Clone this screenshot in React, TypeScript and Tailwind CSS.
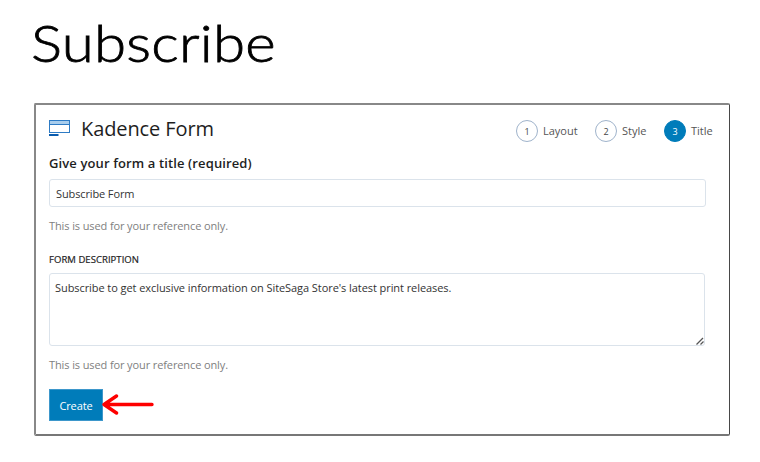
import clsx from "clsx";

interface Step {
  number: number;
  label: string;
  active?: boolean;
  labelClass: string;
}

const steps: Step[] = [
  { number: 1, label: "Layout", labelClass: "w-[52px]" },
  { number: 2, label: "Style", labelClass: "w-[42px]" },
  { number: 3, label: "Title", active: true, labelClass: "w-[22px]" },
];

const FormIcon = () => (
  <svg width="22" height="18" viewBox="0 0 22 18" fill="none">
    <rect x="0.5" y="0.5" width="20" height="4" fill="#a9cdec" stroke="#2e7bc4" />
    <rect x="0.5" y="4.5" width="20" height="8" fill="#fff" stroke="#2e7bc4" />
    <rect x="0" y="14" width="9.5" height="2" fill="#0a5cae" />
  </svg>
);

const HelpText = () => (
  <p className="text-[11px] leading-4 tracking-[-0.11px] text-[#808080]">
    This is used for your reference only.
  </p>
);

const App = () => {
  return (
    <div className="h-[462px] w-[760px] overflow-hidden bg-white pl-[34px] pt-[14px] font-['Open_Sans','Noto_Sans',sans-serif]">
      <h1 className="-ml-[3px] h-[89px] w-fit origin-left scale-x-[1.12] font-['Lato',sans-serif] text-[52px] font-light leading-[56px] tracking-[0.2px] text-black [-webkit-text-stroke:0.8px_black]">
        Subscribe
      </h1>
      <div className="h-[333px] w-[696px] rounded-[2px] border border-b-2 border-l-2 border-t-2 border-b-[#777] border-l-[#888] border-r-[#484848] border-t-[#888] pl-[13px] pr-4">
        <div className="flex h-[48px] items-center justify-between">
          <div className="flex items-center">
            <FormIcon />
            <h2 className="ml-[10px] text-[20px] leading-6 tracking-[-0.1px] text-[#1e1e1e]">
              Kadence Form
            </h2>
          </div>
          <div className="flex items-center pt-1">
            {steps.map((step) => (
              <div key={step.number} className="flex items-center">
                <span
                  className={clsx(
                    "flex size-[22px] items-center justify-center rounded-full border pt-px text-[9px]",
                    step.active
                      ? "border-[#007cba] bg-[#007cba] text-white"
                      : "border-[#9fb3cb] text-[#444]"
                  )}
                >
                  {step.number}
                </span>
                <span
                  className={clsx(
                    "ml-[5px] whitespace-nowrap text-[11px] leading-4 text-[#555]",
                    step.labelClass
                  )}
                >
                  {step.label}
                </span>
              </div>
            ))}
          </div>
        </div>
        <label className="block h-[26px] text-[13px] font-semibold leading-[20px] tracking-[0.12px] text-[#1e1e1e]">
          Give your form a title (required)
        </label>
        <input
          className="block h-[28px] w-[657px] rounded-[3px] border border-[#dbe3eb] px-[6px] pt-[1px] text-[11px] tracking-[-0.12px] text-[#333] outline-none"
          defaultValue="Subscribe Form"
        />
        <div className="mt-[11px]">
          <HelpText />
        </div>
        <label className="mt-[18px] block h-[21px] text-[9.5px] font-medium uppercase leading-4 tracking-[0.05px] text-[#1e1e1e] [-webkit-text-stroke:0.2px_#1e1e1e]">
          Form description
        </label>
        <div className="relative h-[73px] w-[656px]">
          <textarea
            className="block h-full w-full resize-none rounded-[3px] border border-[#dbe3eb] px-[5px] pt-[6px] text-[11px] leading-4 tracking-[-0.07px] text-[#333] outline-none"
            defaultValue="Subscribe to get exclusive information on SiteSaga Store's latest print releases."
          />
          <svg className="absolute bottom-[1px] right-[1px]" width="8" height="8" viewBox="0 0 8 8" stroke="#555" strokeWidth="1.3">
            <path d="M0.5 7.5 7 1M4.5 7.5 7.5 4.5" />
          </svg>
        </div>
        <div className="mt-[11px]">
          <HelpText />
        </div>
        <div className="relative mt-[16px] flex">
          <button className="h-[32px] w-[54px] border border-[#3d97cb] bg-[#007cba] pt-[2px] text-[11px] tracking-[-0.1px] text-white">
            Create
          </button>
          <svg className="absolute left-[53px] top-[4px]" width="54" height="22" viewBox="0 0 54 22" fill="none" stroke="#fe0000" strokeWidth="3.4" strokeLinecap="round" strokeLinejoin="round">
            <path d="M50 11.5H2M14.500 3 2 11.500 14.500 20" />
          </svg>
        </div>
      </div>
    </div>
  );
};

export default App;
